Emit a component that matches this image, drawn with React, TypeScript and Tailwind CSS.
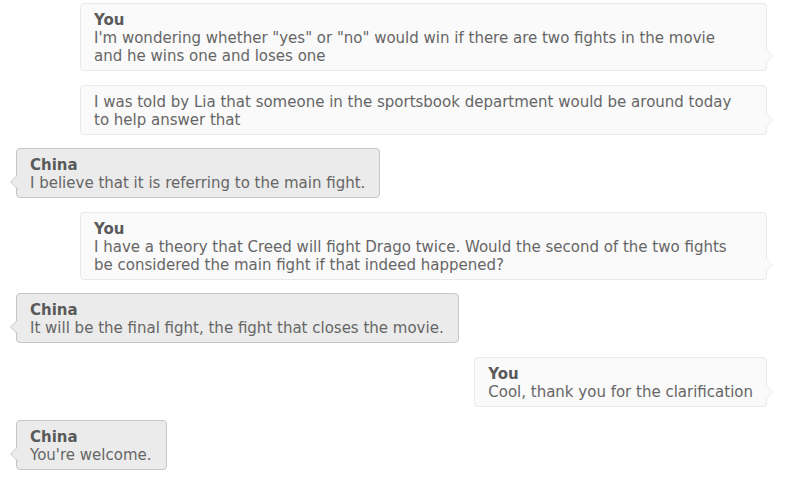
import React from "react";

type Msg = { who: "You" | "China"; name?: boolean; lines: string[] };

const msgs: Msg[] = [
  { who: "You", name: true, lines: [`I'm wondering whether "yes" or "no" would win if there are two fights in the movie`, "and he wins one and loses one"] },
  { who: "You", name: false, lines: ["I was told by Lia that someone in the sportsbook department would be around today", "to help answer that"] },
  { who: "China", name: true, lines: ["I believe that it is referring to the main fight."] },
  { who: "You", name: true, lines: ["I have a theory that Creed will fight Drago twice. Would the second of the two fights", "be considered the main fight if that indeed happened?"] },
  { who: "China", name: true, lines: ["It will be the final fight, the fight that closes the movie."] },
  { who: "You", name: true, lines: ["Cool, thank you for the clarification"] },
  { who: "China", name: true, lines: ["You're welcome."] },
];

function Bubble({ m }: { m: Msg }) {
  const mine = m.who === "You";
  const wide = mine && m.lines.length > 1;
  return (
    <div className={mine ? "flex justify-end pl-[80px] pr-[19px]" : "flex justify-start pl-[16px] pr-[80px]"}>
      <div
        className={
          mine
            ? wide
              ? "relative w-[687px] rounded-[4px] border border-[#e9e9e9] bg-[#fafafa] pl-[13px] pr-[13px] pt-[7px] pb-[5px]"
              : "relative rounded-[4px] border border-[#e9e9e9] bg-[#fafafa] pl-[13px] pr-[13px] pt-[7px] pb-[5px]"
            : "relative rounded-[4px] border border-[#c6c6c6] bg-[#ebebeb] pl-[13px] pr-[14px] pt-[7px] pb-[5px]"
        }
      >
        {m.name && <div className="font-bold text-[#5a5a5a]">{m.who}</div>}
        {m.lines.map((l, i) => (
          <div key={i} className="whitespace-nowrap">
            {l}
          </div>
        ))}
        {mine ? (
          <svg className="absolute right-[-8px] bottom-[6px]" width="9" height="16" viewBox="0 0 9 16">
            <path d="M0 0.5 L7.5 8 L0 15.5" fill="#fafafa" stroke="#e9e9e9" strokeWidth="1" />
            <rect x="-1" y="1.5" width="1.5" height="13" fill="#fafafa" />
          </svg>
        ) : (
          <svg className="absolute left-[-8px] bottom-[7px]" width="9" height="16" viewBox="0 0 9 16">
            <path d="M9 0.5 L1.5 8 L9 15.5" fill="#ebebeb" stroke="#c6c6c6" strokeWidth="1" />
            <rect x="8.5" y="1.5" width="1.5" height="13" fill="#ebebeb" />
          </svg>
        )}
      </div>
    </div>
  );
}

export default function App() {
  return (
    <div
      className="w-[786px] h-[477px] bg-white pt-[3px] flex flex-col gap-[13.5px] text-[15px] leading-[18px] text-[#666666] overflow-hidden"
      style={{ fontFamily: '"DejaVu Sans", Verdana, sans-serif' }}
    >
      {msgs.map((m, i) => (
        <Bubble key={i} m={m} />
      ))}
    </div>
  );
}
